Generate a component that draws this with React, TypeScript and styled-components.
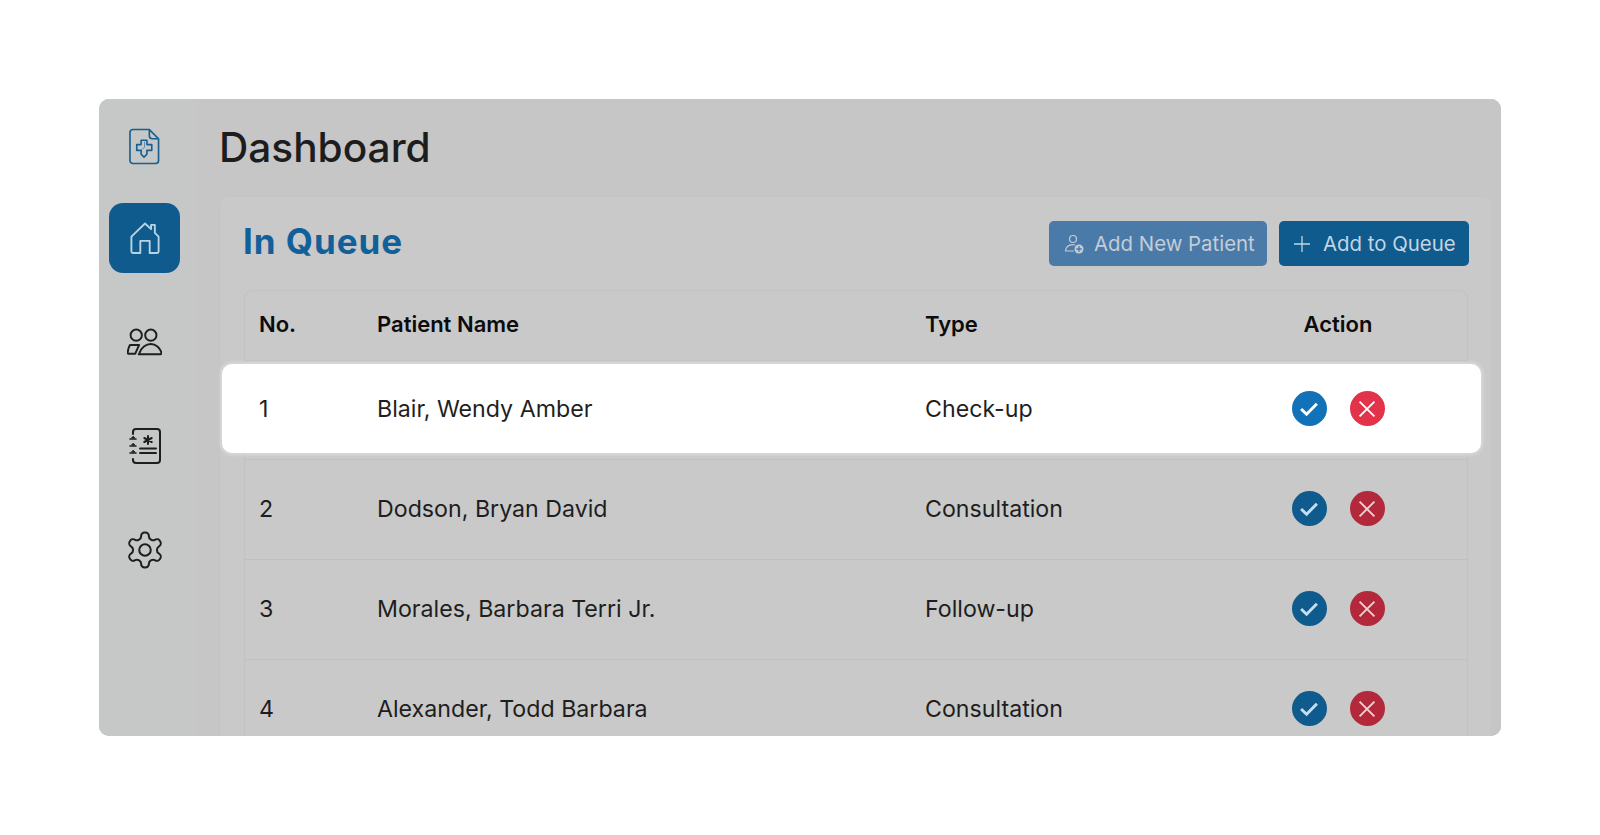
import React from 'react';
import styled, { createGlobalStyle } from 'styled-components';

interface Patient {
  no: number;
  name: string;
  type: string;
}

const patients: Patient[] = [
  { no: 1, name: 'Blair, Wendy Amber', type: 'Check-up' },
  { no: 2, name: 'Dodson, Bryan David', type: 'Consultation' },
  { no: 3, name: 'Morales, Barbara Terri Jr.', type: 'Follow-up' },
  { no: 4, name: 'Alexander, Todd Barbara', type: 'Consultation' },
];

const GlobalStyle = createGlobalStyle`
  html, body {
    margin: 0;
    padding: 0;
    background: #fff;
    font-family: Inter, "Liberation Sans", sans-serif;
  }
  * { box-sizing: border-box; }
`;

const Page = styled.div`
  width: 1600px;
  height: 835px;
  padding: 99px 99px 99px 99px;
  overflow: hidden;
`;

const Frame = styled.div`
  display: flex;
  height: 637px;
  background: #c3c4c4;
  border-radius: 10px;
  overflow: hidden;
`;

const Sidebar = styled.nav`
  flex: 0 0 98px;
  display: flex;
  flex-direction: column;
  align-items: center;
  padding: 29px 7px 0 0;
  background: #c6c7c7;
`;

const NavItem = styled.div<{ $active?: boolean; $gap: number }>`
  display: flex;
  flex: 0 0 70px;
  align-items: center;
  justify-content: center;
  width: 71px;
  height: 70px;
  margin-top: ${(p) => p.$gap}px;
  border-radius: 14px;
  background: ${(p) => (p.$active ? '#0f5b8e' : 'transparent')};
  color: ${(p) => (p.$active ? '#b9d3e6' : '#1e1e1e')};
`;

const Main = styled.main`
  flex: 1;
  display: flex;
  flex-direction: column;
  padding: 0 9px 0 22px;
  background: #c6c6c6;
  min-width: 0;
`;

const Title = styled.h1`
  margin: 0;
  height: 97px;
  line-height: 98px;
  font-size: 40.6px;
  font-weight: 500;
  color: #1d1d1d;
`;

const Card = styled.section`
  flex: 1;
  display: flex;
  flex-direction: column;
  padding: 24px 22px 0 24px;
  background: #c9c9c9;
  border: 1px solid #c4c4c4;
  border-bottom: 0;
  border-radius: 8px 8px 0 0;
`;

const CardHeader = styled.header`
  display: flex;
  align-items: center;
  justify-content: space-between;
  height: 45px;
`;

const CardTitle = styled.h2`
  margin: -5px 0 0 -1px;
  font-size: 35px;
  font-weight: 700;
  letter-spacing: 0.95px;
  color: #12609a;
`;

const Actions = styled.div`
  display: flex;
  gap: 12px;
`;

const HeadButton = styled.button<{ $light?: boolean; $width: number }>`
  display: flex;
  align-items: center;
  gap: ${(p) => (p.$light ? 10 : 13)}px;
  width: ${(p) => p.$width}px;
  height: 45px;
  padding: 0 0 0 15px;
  border: 0;
  border-radius: 5px;
  background: ${(p) => (p.$light ? '#4a7aa8' : '#0f5b8e')};
  color: ${(p) => (p.$light ? '#c2cdd8' : '#c4d5e2')};
  font-family: inherit;
  font-size: 20.4px;
  font-weight: 400;
  white-space: nowrap;
`;

const Table = styled.div`
  margin: 24px 1px 0 0;
  flex: 1;
  border: 1px solid #c2c2c2;
  border-bottom: 0;
  border-radius: 8px 8px 0 0;
`;

const columns = '118px 548px 305px 216px';

const HeadRow = styled.div`
  display: grid;
  grid-template-columns: ${columns};
  align-items: center;
  height: 70px;
  padding: 0 0 3px 14px;
  border-bottom: 1px solid #bfbfbf;
  font-size: 22px;
  font-weight: 600;
  color: #0c0c0c;
`;

const ActionHead = styled.div`
  text-align: center;
`;

const Row = styled.div<{ $active?: boolean }>`
  display: grid;
  grid-template-columns: ${columns};
  align-items: center;
  height: ${(p) => (p.$active ? '89px' : '100px')};
  font-size: 23.2px;
  color: ${(p) => (p.$active ? '#1f1f1f' : '#1e1e1e')};
  ${(p) =>
    p.$active
      ? `
    position: relative;
    margin: 3px -14px 6px -23px;
    padding-left: 37px;
    background: #fff;
    border-radius: 10px;
    box-shadow: 0 0 4px 1px rgba(255, 255, 255, 0.45);
  `
      : `
    padding: 0 0 2px 14px;
    border-top: 1px solid #c0c0c0;
  `}
`;

const RowActions = styled.div`
  display: flex;
  justify-content: center;
  gap: 23px;
`;

const Round = styled.span<{ $color: string }>`
  display: flex;
  align-items: center;
  justify-content: center;
  width: 35px;
  height: 35px;
  border-radius: 50%;
  background: ${(p) => p.$color};
`;

const FileIcon = () => (
  <svg width="31" height="37" viewBox="0 0 32 38" fill="none" stroke="#17608f" strokeWidth="1.7" strokeLinejoin="round">
    <path d="M4 1.500h17l9.500 9.500v22.500a3 3 0 0 1-3 3H4a3 3 0 0 1-3-3V4.500a3 3 0 0 1 3-3z" />
    <path d="M21 1.500V8a3 3 0 0 0 3 3h6.500" />
    <path d="M12.500 12.500h6v4.500h5v6l-5 0v4l-3 3-3-3v-4h-4.500v-6h4.500z" />
    <path d="M16 14v6l-3 2" stroke="#5f86b4" strokeWidth="1" />
  </svg>
);

const HomeIcon = () => (
  <svg width="30" height="32" viewBox="0 0 32 34" fill="none" stroke="currentColor" strokeWidth="2" strokeLinejoin="round">
    <path d="M1.500 15.500 16 1.500l6.500 6V3h4v8.500l4 4v16a1.500 1.500 0 0 1-1.500 1.500h-8V20h-10v13H3a1.500 1.500 0 0 1-1.500-1.500z" />
  </svg>
);

const PeopleIcon = () => (
  <svg width="35" height="28" viewBox="0 0 36 28" fill="none" stroke="currentColor" strokeWidth="2" strokeLinejoin="round">
    <circle cx="9.500" cy="7" r="5.800" />
    <circle cx="24.500" cy="7" r="5.800" />
    <path d="M3 17h9.500l-4 9H1.500a.8.8 0 0 1-.8-1C1 22 1.800 19 3 17z" />
    <path d="M12 26.500h22.500c.8 0 1.200-.5 1-1.300C34 20 29.500 16 24.500 16s-10 4-11.500 9c-.2.800-.3 1.500-1 1.500z" />
  </svg>
);

const ContactsIcon = () => (
  <svg width="32" height="36" viewBox="0 0 32 36" fill="none" stroke="currentColor" strokeWidth="2" strokeLinecap="round">
    <path d="M4 6V4a3 3 0 0 1 3-3h21a3 3 0 0 1 3 3v28a3 3 0 0 1-3 3H7a3 3 0 0 1-3-3v-1" />
    <path d="M1 11h6M1 18h6M1 25h6" strokeWidth="1.600" />
    <path d="M4 8.500 2.600 10h2.800zM4 15.500 2.600 17h2.800zM4 22.500 2.600 24h2.800z" fill="currentColor" strokeWidth="1" />
    <path d="M19 8v8M15.300 10l7.400 4M22.700 10l-7.400 4" strokeWidth="2" />
    <path d="M11 20.500h16M11 25h16" />
  </svg>
);

const GearIcon = () => (
  <svg width="42" height="42" viewBox="0 0 24 24" fill="none" stroke="currentColor" strokeWidth="1.150" strokeLinecap="round" strokeLinejoin="round">
    <path d="M12.220 2h-.44a2 2 0 0 0-2 2v.18a2 2 0 0 1-1 1.730l-.43.250a2 2 0 0 1-2 0l-.150-.080a2 2 0 0 0-2.730.730l-.220.380a2 2 0 0 0 .730 2.730l.150.100a2 2 0 0 1 1 1.720v.510a2 2 0 0 1-1 1.740l-.150.090a2 2 0 0 0-.730 2.730l.220.380a2 2 0 0 0 2.730.730l.150-.080a2 2 0 0 1 2 0l.430.250a2 2 0 0 1 1 1.730V20a2 2 0 0 0 2 2h.440a2 2 0 0 0 2-2v-.180a2 2 0 0 1 1-1.730l.430-.250a2 2 0 0 1 2 0l.150.080a2 2 0 0 0 2.730-.730l.220-.390a2 2 0 0 0-.730-2.730l-.150-.080a2 2 0 0 1-1-1.740v-.500a2 2 0 0 1 1-1.740l.150-.090a2 2 0 0 0 .730-2.730l-.220-.380a2 2 0 0 0-2.730-.730l-.150.080a2 2 0 0 1-2 0l-.430-.250a2 2 0 0 1-1-1.730V4a2 2 0 0 0-2-2z" />
    <circle cx="12" cy="12" r="3.300" />
  </svg>
);

const AddUserIcon = () => (
  <svg width="20" height="20" viewBox="0 0 20 20" fill="none" stroke="#c2cdd8" strokeWidth="1.200" strokeLinecap="round">
    <circle cx="9" cy="5" r="3.500" />
    <path d="M1.500 17c0-3.800 3-6.300 7-6.300.8 0 1.500.1 2.200.3M1.500 17h8" />
    <circle cx="15" cy="15" r="4.500" fill="#c2cdd8" stroke="none" />
    <path d="M15 12.800v4.400M12.800 15h4.400" stroke="#4a7aa8" strokeWidth="1.400" />
  </svg>
);

const PlusIcon = () => (
  <svg width="16" height="16" viewBox="0 0 16 16" stroke="#c4d5e2" strokeWidth="1.300">
    <path d="M8 0v16M0 8h16" />
  </svg>
);

const CheckIcon = ({ color }: { color: string }) => (
  <svg width="20" height="16" viewBox="0 0 19 15" fill="none" stroke={color} strokeWidth="2.800">
    <path d="M2 7.500 7.200 12.500 17 2.500" />
  </svg>
);

const CrossIcon = ({ color }: { color: string }) => (
  <svg width="18" height="18" viewBox="0 0 17 17" stroke={color} strokeWidth="1.800">
    <path d="M1.500 1.500l14 14M15.500 1.500l-14 14" />
  </svg>
);

export default function App() {
  return (
    <Page>
      <GlobalStyle />
      <Frame>
        <Sidebar>
          <FileIcon />
          <NavItem $active $gap={38}>
            <HomeIcon />
          </NavItem>
          <NavItem $gap={34}>
            <PeopleIcon />
          </NavItem>
          <NavItem $gap={34}>
            <ContactsIcon />
          </NavItem>
          <NavItem $gap={34}>
            <GearIcon />
          </NavItem>
        </Sidebar>
        <Main>
          <Title>Dashboard</Title>
          <Card>
            <CardHeader>
              <CardTitle>In Queue</CardTitle>
              <Actions>
                <HeadButton $light $width={218}>
                  <AddUserIcon />
                  Add New Patient
                </HeadButton>
                <HeadButton $width={190}>
                  <PlusIcon />
                  Add to Queue
                </HeadButton>
              </Actions>
            </CardHeader>
            <Table>
              <HeadRow>
                <div>No.</div>
                <div>Patient Name</div>
                <div>Type</div>
                <ActionHead>Action</ActionHead>
              </HeadRow>
              {patients.map((p, i) => (
                <Row key={p.no} $active={i === 0}>
                  <div>{p.no}</div>
                  <div>{p.name}</div>
                  <div>{p.type}</div>
                  <RowActions>
                    <Round $color={i === 0 ? '#1272b8' : '#0f5b8e'}>
                      <CheckIcon color={i === 0 ? '#ffffff' : '#c4deef'} />
                    </Round>
                    <Round $color={i === 0 ? '#e2334a' : '#b4283b'}>
                      <CrossIcon color={i === 0 ? '#ffffff' : '#f0d2d2'} />
                    </Round>
                  </RowActions>
                </Row>
              ))}
            </Table>
          </Card>
        </Main>
      </Frame>
    </Page>
  );
}
